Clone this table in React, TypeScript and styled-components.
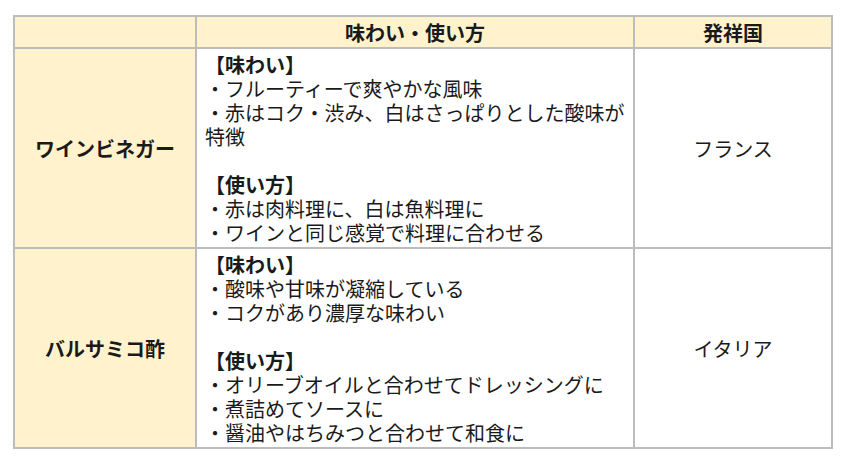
import React from 'react';
import styled, { createGlobalStyle } from 'styled-components';

type Vinegar = {
  name: string;
  taste: string[];
  usage: string[];
  origin: string;
};

const vinegars: Vinegar[] = [
  {
    name: 'ワインビネガー',
    taste: ['フルーティーで爽やかな風味', '赤はコク・渋み、白はさっぱりとした酸味が特徴'],
    usage: ['赤は肉料理に、白は魚料理に', 'ワインと同じ感覚で料理に合わせる'],
    origin: 'フランス',
  },
  {
    name: 'バルサミコ酢',
    taste: ['酸味や甘味が凝縮している', 'コクがあり濃厚な味わい'],
    usage: ['オリーブオイルと合わせてドレッシングに', '煮詰めてソースに', '醤油やはちみつと合わせて和食に'],
    origin: 'イタリア',
  },
];

export default function App() {
  return (
    <>
      <GlobalStyle />
      <Wrapper>
        <Table>
          <colgroup>
            <col style={{ width: 182 }} />
            <col style={{ width: 438 }} />
            <col style={{ width: 198 }} />
          </colgroup>
          <thead>
            <tr>
              <HeadCell />
              <HeadCell>味わい・使い方</HeadCell>
              <HeadCell>発祥国</HeadCell>
            </tr>
          </thead>
          <tbody>
            {vinegars.map((v) => (
              <tr key={v.name}>
                <NameCell>{v.name}</NameCell>
                <DetailCell>
                  <Label>【味わい】</Label>
                  {v.taste.map((t) => (
                    <Item key={t}>・{t}</Item>
                  ))}
                  <Spacer />
                  <Label>【使い方】</Label>
                  {v.usage.map((u) => (
                    <Item key={u}>・{u}</Item>
                  ))}
                </DetailCell>
                <OriginCell>{v.origin}</OriginCell>
              </tr>
            ))}
          </tbody>
        </Table>
      </Wrapper>
    </>
  );
}

const GlobalStyle = createGlobalStyle`
  body {
    margin: 0;
    background: #fff;
    font-family: "Noto Sans CJK JP", "Noto Sans", sans-serif;
    color: #1a1a1a;
  }
`;

const Wrapper = styled.div`
  padding: 15px 0 0 13px;
`;

const Table = styled.table`
  border-collapse: collapse;
  table-layout: fixed;
  width: 820px;
  font-size: 20px;
  line-height: 24px;
`;

const Cell = styled.td`
  border: 2px solid #bcbcbc;
  padding: 4px 8px 2px;
`;

const HeadCell = styled(Cell).attrs({ as: 'th' })`
  background: #fff2cc;
  font-weight: bold;
  text-align: center;
`;

const NameCell = styled(Cell)`
  background: #fff2cc;
  font-weight: bold;
  text-align: center;
  vertical-align: middle;
`;

const DetailCell = styled(Cell)`
  vertical-align: top;
`;

const OriginCell = styled(Cell)`
  text-align: center;
  vertical-align: middle;
`;

const Label = styled.div`
  font-weight: bold;
`;

const Item = styled.div``;

const Spacer = styled.div`
  height: 24px;
`;
